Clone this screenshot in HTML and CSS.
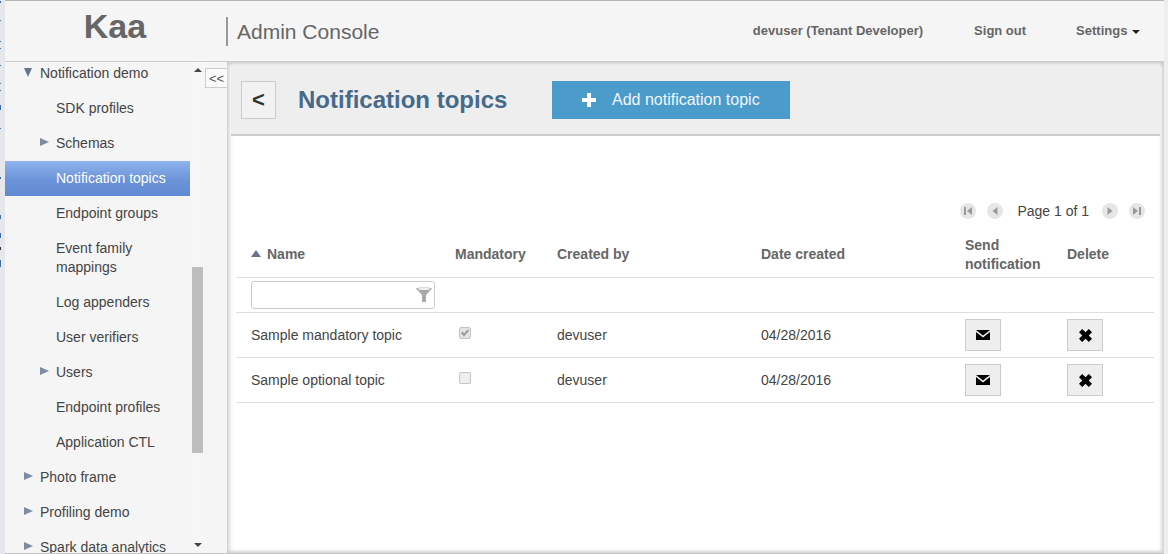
FILE: index.html
```html
<!DOCTYPE html>
<html lang="en">

<head>
    <meta charset="UTF-8">
    <title>Kaa Admin Console</title>
    <link rel="stylesheet" href="styles.css">
</head>

<body>
    <div class="desktop-edge">
        <svg width="5" height="270" viewBox="0 0 5 270">
            <g fill="#3f6f9f">
                <rect y="1" width="1" height="2"/>
                <rect y="20" width="1" height="1"/>
                <rect y="41" width="1" height="1"/>
                <rect y="48" width="1" height="1"/>
                <rect y="65" width="1" height="1"/>
                <rect y="83" width="1" height="1"/>
                <rect y="90" width="1" height="1"/>
                <rect y="105" width="1" height="5"/>
                <rect y="128" width="1" height="1"/>
                <rect y="177" width="1" height="2"/>
                <rect y="215" width="1" height="4"/>
                <rect y="233" width="1" height="5"/>
                <rect y="247" width="1" height="3" fill="#333"/>
                <rect y="260" width="1" height="7"/>
            </g>
        </svg>
    </div>

    <div class="app">
        <header class="topbar">
            <div class="logo">Kaa</div>
            <div class="console-title">Admin Console</div>
            <nav class="topnav">
                <span class="user-name">devuser (Tenant Developer)</span>
                <a class="sign-out">Sign out</a>
                <a class="settings">Settings <i class="caret"></i></a>
            </nav>
        </header>

        <div class="workspace">
            <aside class="sidebar">
                <ul class="tree">
                    <li class="tree-item level-1"><i class="arrow arrow-down"></i>Notification demo</li>
                    <li class="tree-item level-2">SDK profiles</li>
                    <li class="tree-item level-2"><i class="arrow arrow-right"></i>Schemas</li>
                    <li class="tree-item level-2 selected">Notification topics</li>
                    <li class="tree-item level-2">Endpoint groups</li>
                    <li class="tree-item level-2 two-lines">Event family mappings</li>
                    <li class="tree-item level-2">Log appenders</li>
                    <li class="tree-item level-2">User verifiers</li>
                    <li class="tree-item level-2"><i class="arrow arrow-right"></i>Users</li>
                    <li class="tree-item level-2">Endpoint profiles</li>
                    <li class="tree-item level-2">Application CTL</li>
                    <li class="tree-item level-1"><i class="arrow arrow-right"></i>Photo frame</li>
                    <li class="tree-item level-1"><i class="arrow arrow-right"></i>Profiling demo</li>
                    <li class="tree-item level-1"><i class="arrow arrow-right"></i>Spark data analytics</li>
                </ul>
                <div class="scrollbar">
                    <i class="scroll-up"></i>
                    <div class="scroll-thumb"></div>
                    <i class="scroll-down"></i>
                </div>
                <div class="splitter">
                    <button class="collapse-btn">&lt;&lt;</button>
                </div>
            </aside>

            <main class="content">
                <div class="title-bar">
                    <button class="back-btn">&lt;</button>
                    <h1 class="page-title">Notification topics</h1>
                    <button class="add-btn">
                        <svg width="14" height="14" viewBox="0 0 14 14">
                            <path d="M5 0h4v5h5v4H9v5H5V9H0V5h5z" fill="#fff"/>
                        </svg>
                        <span>Add notification topic</span>
                    </button>
                </div>

                <div class="pager">
                    <span class="page-btn">
                        <svg width="16" height="16" viewBox="0 0 16 16"><path d="M4 4h2v8H4zM12 4v8L7 8z"/></svg>
                    </span>
                    <span class="page-btn">
                        <svg width="16" height="16" viewBox="0 0 16 16"><path d="M10.5 4v8L5.5 8z"/></svg>
                    </span>
                    <span class="page-label">Page 1 of 1</span>
                    <span class="page-btn">
                        <svg width="16" height="16" viewBox="0 0 16 16"><path d="M5.5 4v8l5-4z"/></svg>
                    </span>
                    <span class="page-btn">
                        <svg width="16" height="16" viewBox="0 0 16 16"><path d="M4 4v8l5-4zM10 4h2v8h-2z"/></svg>
                    </span>
                </div>

                <table class="topics">
                    <colgroup>
                        <col class="col-wide">
                        <col class="col-narrow">
                        <col class="col-wide">
                        <col class="col-wide">
                        <col class="col-narrow">
                        <col class="col-narrow">
                    </colgroup>
                    <thead>
                        <tr class="head-row">
                            <th><i class="sort-up"></i>Name</th>
                            <th>Mandatory</th>
                            <th>Created by</th>
                            <th>Date created</th>
                            <th>Send notification</th>
                            <th>Delete</th>
                        </tr>
                        <tr class="filter-row">
                            <td>
                                <div class="filter-box">
                                    <input type="text">
                                    <svg class="funnel" width="18" height="18" viewBox="0 0 18 18">
                                        <path d="M1 3.5C1 2 17 2 17 3.5L11 10v7H7v-7z" fill="#a9a9a9"/>
                                        <ellipse cx="9" cy="3.8" rx="6.4" ry="1.3" fill="#eee"/>
                                    </svg>
                                </div>
                            </td>
                            <td colspan="5"></td>
                        </tr>
                    </thead>
                    <tbody>
                        <tr>
                            <td>Sample mandatory topic</td>
                            <td><input class="check" type="checkbox" checked disabled></td>
                            <td>devuser</td>
                            <td>04/28/2016</td>
                            <td><button class="icon-btn"><svg width="14" height="10" viewBox="0 0 14 10"><path d="M0 0h14L7 5.5zM0 2l7 5.5L14 2v8H0z"/></svg></button></td>
                            <td><button class="icon-btn"><svg width="13" height="13" viewBox="0 0 13 13"><path d="M3.2 0 6.5 3.3 9.8 0 13 3.2 9.7 6.5 13 9.8 9.8 13 6.5 9.7 3.2 13 0 9.8 3.3 6.5 0 3.2z"/></svg></button></td>
                        </tr>
                        <tr>
                            <td>Sample optional topic</td>
                            <td><input class="check" type="checkbox" disabled></td>
                            <td>devuser</td>
                            <td>04/28/2016</td>
                            <td><button class="icon-btn"><svg width="14" height="10" viewBox="0 0 14 10"><path d="M0 0h14L7 5.5zM0 2l7 5.5L14 2v8H0z"/></svg></button></td>
                            <td><button class="icon-btn"><svg width="13" height="13" viewBox="0 0 13 13"><path d="M3.2 0 6.5 3.3 9.8 0 13 3.2 9.7 6.5 13 9.8 9.8 13 6.5 9.7 3.2 13 0 9.8 3.3 6.5 0 3.2z"/></svg></button></td>
                        </tr>
                    </tbody>
                </table>
            </main>
        </div>
    </div>

    <div class="right-edge"></div>
</body>

</html>
```

FILE: styles.css
```css
html, body {
    height: 100%;
}

body {
    font-family: 'Liberation Sans', Arial, sans-serif;
    font-size: 14px;
    color: #444;
    margin: 0;
    display: flex;
    overflow: hidden;
    background-color: #eeeef0;
}

.desktop-edge {
    width: 5px;
    flex: none;
    background-color: #e6e7ea;
}

.desktop-edge svg {
    display: block;
}

.right-edge {
    width: 4px;
    flex: none;
    background-color: #eeeef1;
}

.app {
    flex: 1;
    min-width: 0;
    display: flex;
    flex-direction: column;
    height: 553px;
    background-color: #f5f5f5;
    border-bottom: 1px solid #c4c4c4;
}

/* header */
.topbar {
    height: 60px;
    flex: none;
    display: flex;
    align-items: center;
    border-top: 1px solid #b5b5b5;
    border-bottom: 1px solid #ccc;
    background-color: #f5f5f5;
}

.logo {
    width: 220px;
    font-size: 34px;
    font-weight: bold;
    color: #666;
    text-align: center;
    margin-top: -10px;
}

.console-title {
    margin-left: 1px;
    padding-left: 9px;
    border-left: 2px solid #999;
    font-size: 21px;
    line-height: 29px;
    color: #666;
}

.topnav {
    margin-left: auto;
    display: flex;
    align-items: center;
    font-size: 13px;
    font-weight: bold;
    color: #666;
    padding-right: 24px;
    margin-top: -1px;
}

.sign-out {
    margin-left: 51px;
}

.settings {
    margin-left: 50px;
}

.caret {
    display: inline-block;
    width: 0;
    height: 0;
    margin-left: 1px;
    vertical-align: middle;
    border-top: 4px solid #222;
    border-left: 4px solid transparent;
    border-right: 4px solid transparent;
}

/* left tree */
.workspace {
    flex: 1;
    min-height: 0;
    display: flex;
}

.sidebar {
    width: 222px;
    flex: none;
    display: flex;
    overflow: hidden;
}

.tree {
    width: 185px;
    flex: none;
    list-style: none;
    margin: -6px 0 0;
    padding: 0;
    color: #444;
}

.tree-item {
    position: relative;
    height: 35px;
    line-height: 35px;
}

.level-1 {
    padding-left: 35px;
}

.level-2 {
    padding-left: 51px;
}

.two-lines {
    height: 54px;
    padding-top: 8px;
    padding-right: 40px;
    line-height: 19px;
    box-sizing: border-box;
}

.selected {
    color: #fff;
    background: linear-gradient(#8fb3ee, #6b93d8 55%, #628ad4);
}

.arrow {
    position: absolute;
    top: 12px;
    width: 0;
    height: 0;
}

.level-1 .arrow {
    left: 19px;
}

.level-2 .arrow {
    left: 35px;
}

.arrow-right {
    border-top: 4.5px solid transparent;
    border-bottom: 4.5px solid transparent;
    border-left: 9px solid #7f8ba0;
}

.arrow-down {
    border-left: 4.5px solid transparent;
    border-right: 4.5px solid transparent;
    border-top: 9px solid #66758c;
}

.scrollbar {
    width: 15px;
    flex: none;
    display: flex;
    flex-direction: column;
    align-items: center;
    background-color: #f6f6f6;
    padding: 6px 0;
    box-sizing: border-box;
}

.scroll-thumb {
    width: 11px;
    height: 186px;
    margin: 195px 0 auto;
    background-color: #bdbdbd;
}

.scroll-up,
.scroll-down {
    width: 0;
    height: 0;
    border-left: 4px solid transparent;
    border-right: 4px solid transparent;
}

.scroll-up {
    border-bottom: 4px solid #444;
}

.scroll-down {
    border-top: 4px solid #444;
}

.splitter {
    width: 22px;
    flex: none;
    padding-top: 6px;
}

.collapse-btn {
    display: block;
    width: 22px;
    height: 20px;
    padding: 0;
    font-family: 'Liberation Sans', Arial, sans-serif;
    font-size: 13px;
    color: #555;
    background-color: #fafafa;
    border: 1px solid #ccc;
    border-right: none;
}

/* main panel */
.content {
    flex: 1;
    min-width: 0;
    background-color: #fff;
    padding: 3px 4px 0 4px;
    box-shadow: inset 3px 3px 4px -1px #c8c8c8, inset -4px 0 3px -1px #d8d8d8, inset 0 -3px 3px -1px #d4d4d4;
}

.title-bar {
    height: 68px;
    padding: 1px 0 0 10px;
    display: flex;
    align-items: center;
    background-color: #eee;
    border-bottom: 2px solid #ccc;
}

.back-btn {
    width: 35px;
    height: 38px;
    padding: 0;
    font-family: 'Liberation Sans', Arial, sans-serif;
    font-size: 22px;
    font-weight: bold;
    color: #333;
    background-color: #f2f2f2;
    border: 1px solid #ccc;
}

.page-title {
    width: 254px;
    margin: 0 0 0 22px;
    font-size: 24px;
    font-weight: bold;
    color: #466a8a;
}

.add-btn {
    width: 238px;
    height: 38px;
    display: flex;
    align-items: center;
    padding: 0 0 0 30px;
    font-family: 'Liberation Sans', Arial, sans-serif;
    font-size: 16px;
    color: #f2f7fb;
    background-color: #4b9bcb;
    border: none;
}

.add-btn span {
    margin-left: 16px;
}

.pager {
    height: 22px;
    margin: 64px 15px 0 0;
    display: flex;
    align-items: center;
    justify-content: flex-end;
    gap: 11px;
}

.page-btn {
    width: 16px;
    height: 16px;
    border-radius: 50%;
    background-color: #e6e6e6;
}

.page-btn svg {
    display: block;
    fill: #999;
}

.page-label {
    margin: 0 2px 0 3px;
    color: #444;
}

.topics {
    width: 918px;
    margin: 11px 0 0 5px;
    table-layout: fixed;
    border-collapse: collapse;
}

.col-wide {
    width: 204px;
}

.col-narrow {
    width: 102px;
}

.topics th {
    height: 43px;
    padding: 0 15px 1px;
    font-weight: bold;
    text-align: left;
    color: #666;
    line-height: 19px;
    border-bottom: 1px solid #ddd;
}

.topics td {
    height: 44px;
    padding: 0 15px;
    color: #444;
    border-bottom: 1px solid #ddd;
}

.topics .filter-row td {
    height: 34px;
}

.sort-up {
    display: inline-block;
    width: 0;
    height: 0;
    margin-right: 6px;
    vertical-align: 2px;
    border-left: 5px solid transparent;
    border-right: 5px solid transparent;
    border-bottom: 7px solid #66758c;
}

.filter-box {
    position: relative;
    width: 184px;
    height: 28px;
}

.filter-box input {
    width: 100%;
    height: 100%;
    box-sizing: border-box;
    border: 1px solid #ccc;
    border-radius: 3px;
    background-color: #fff;
}

.funnel {
    position: absolute;
    top: 4px;
    right: 2px;
}

.check {
    appearance: none;
    position: relative;
    display: block;
    width: 12px;
    height: 12px;
    margin: -4px 0 0 4px;
    box-sizing: border-box;
    border: 1px solid #c4c4c4;
    border-radius: 2px;
    background-color: #eee;
}

.check:checked {
    background-color: #e2e2e2;
}

.check:checked::after {
    content: "";
    position: absolute;
    left: 1px;
    top: 1px;
    width: 8px;
    height: 8px;
    background-color: #999;
    clip-path: polygon(0 50%, 20% 32%, 38% 55%, 82% 5%, 100% 22%, 38% 95%);
}

.icon-btn {
    display: flex;
    align-items: center;
    justify-content: center;
    width: 36px;
    height: 32px;
    padding: 0;
    background-color: #eee;
    border: 1px solid #ccc;
}

.icon-btn svg {
    display: block;
    fill: #000;
}
```
